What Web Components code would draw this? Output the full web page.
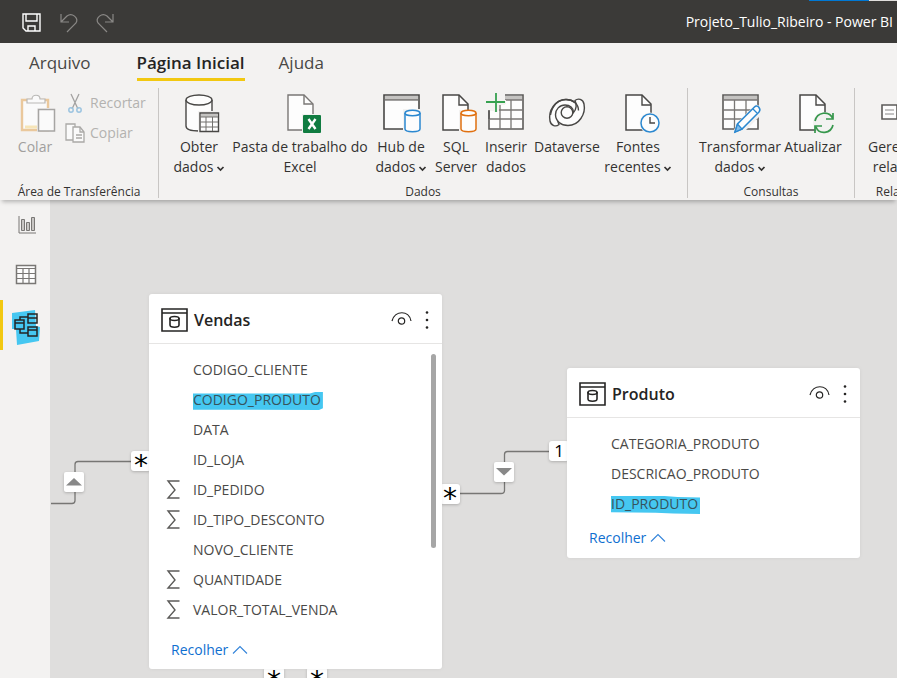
<!DOCTYPE html>
<html lang="pt-BR">
<head>
<meta charset="utf-8">
<meta name="viewport" content="width=device-width, initial-scale=1">
<title>Projeto_Tulio_Ribeiro - Power BI</title>
<style>
html, body { margin: 0; height: 100%; }
body { font-family: "Open Sans", "Noto Sans", sans-serif; font-size: 14px; line-height: 20px; color: #333231; background: #dfdedd; overflow: hidden; }
</style>
</head>
<body>
<pbi-app></pbi-app>
<script>
const ICONS = {
  save: [20, 20, '<g fill="none" stroke="#fff" stroke-width="1.4"><path d="M1 1h17v17H4l-3-3z"/><path d="M4 1v7h11V1M6 18v-5h7v5"/></g>'],
  undo: [20, 20, '<path d="M2 1v8h8M2 9l6-6c5-4 12 2 9 7L8 19" fill="none" stroke="#8a8886" stroke-width="1.2"/>'],
  redo: [20, 20, '<path d="M17 1v8H9M17 9l-6-6C6-1-1 5 2 10l9 9" fill="none" stroke="#8a8886" stroke-width="1.2"/>'],
  paste: [30, 40, '<path d="M2 7h26v30H2z" fill="#fafafa" stroke="#eac89c" stroke-width="2.4"/><path d="M5 34h12" stroke="#f6e5b8" stroke-width="3"/><path d="M7 10V6h5c0-5 8-5 8 0h5v4z" fill="#fafafa" stroke="#b9b8b6" stroke-width="1.2"/><path d="M17 15v25h3V18h14v-3z" fill="#f3f2f1"/><path d="M18.500 16.500h16v21.500h-16z" fill="#fafafa" stroke="#a6a5a3" stroke-width="1.500"/>'],
  cut: [20, 20, '<path d="M6 1l7 15M14 1L7 16" stroke="#a3a2a1" fill="none" stroke-width="1.3"/><g fill="none" stroke="#9cc4e0" stroke-width="1.5"><circle cx="6" cy="17" r="2.200"/><circle cx="14" cy="17" r="2.200"/></g>'],
  copy: [20, 20, '<g fill="#fafafa" stroke="#aaa9a7" stroke-width="1.3"><path d="M8 17H1V1h9v3"/><path d="M8 4h7l4 5v10H8z"/><path d="M15 4v5h4M11 12h6M11 15h6" fill="none"/></g>'],
  database: [30, 40, '<path d="M2 7v26c0 3.500 6 5 13 5s13-1.500 13-5V7" fill="#fdfdfd" stroke="#484745" stroke-width="1.400"/><ellipse cx="15" cy="7" rx="13" ry="5" fill="#fdfdfd" stroke="#484745" stroke-width="1.400"/><path d="M14 18h22v21H14z" fill="#f3f2f1"/><path d="M16 20h18.500v18.500H16z" fill="#fdfdfd" stroke="#484745" stroke-width="1.400"/><path d="M17 21h17v3H17z" fill="#c4c3c1"/><path d="M16 24h18M16 29h18M16 34h18M22 24v14M28.500 24v14" stroke="#72716f" fill="none"/>'],
  excel: [30, 40, '<path d="M3 2h16l9 9v26H3z" fill="#fdfdfd" stroke="#797775" stroke-width="1.400"/><path d="M19 2v9h9" fill="none" stroke="#797775" stroke-width="1.400"/><path d="M17 21h18v19H17z" fill="#f3f2f1"/><rect x="18" y="22" width="18" height="18" rx="1" fill="#107c41"/><path d="M23.500 26l7 10M30.500 26l-7 10" stroke="#fff" stroke-width="2.400"/>'],
  hub: [36, 40, '<path d="M1 2h35v34H1z" fill="#fdfdfd" stroke="#484745" stroke-width="1.600"/><path d="M2 3h33v4H2z" fill="#c4c3c1"/><path d="M2 7h33" stroke="#484745" stroke-width="1.200"/><path d="M20 16h18v24H20z" fill="#f3f2f1"/><path d="M22 20v16c0 3.500 15 3.500 15 0V20" fill="#fdfdfd" stroke="#2b88d0" stroke-width="1.500"/><ellipse cx="29.500" cy="20" rx="7.500" ry="2.800" fill="#fdfdfd" stroke="#2b88d0" stroke-width="1.500"/>'],
  sql: [32, 40, '<path d="M3 2h16l9 9v26H3z" fill="#fdfdfd" stroke="#484745" stroke-width="1.500"/><path d="M19 2v10h9" fill="none" stroke="#484745" stroke-width="1.400"/><path d="M19 17h17v23H19z" fill="#f3f2f1"/><path d="M21 20v16c0 3.500 15 3.500 15 0V20" fill="#fdfdfd" stroke="#e07010" stroke-width="1.500"/><ellipse cx="28.500" cy="20" rx="7.500" ry="2.800" fill="#fdfdfd" stroke="#e07010" stroke-width="1.500"/>'],
  insert: [40, 40, '<path d="M3 2h34v34H3z" fill="#fdfdfd" stroke="#5c5b59" stroke-width="1.600"/><path d="M4 3h32v4H4z" fill="#c4c3c1"/><path d="M3 7h34M3 17h34M3 26h34M14 7v29M25 7v29" stroke="#797775" stroke-width="1.300" fill="none"/><path d="M0 0h19v12h-6v6H0z" fill="#f3f2f1"/><path d="M10 0v19M0 9h20" stroke="#f3f2f1" stroke-width="4"/><path d="M10 0v19M0 9h19" stroke="#36a150" stroke-width="1.800"/><path d="M3 17v9" stroke="#5c5b59" stroke-width="1.600"/>'],
  dataverse: [38, 40, '<g fill="#fdfdfd" stroke="#484745" stroke-width="1.400"><path d="M11 31.500C8 34 3 33 2 28 0 18 7 6.500 18 6.500c7 0 12.500 4.500 12.500 11 0 5-4 9.500-9.500 9.500-5 0-8.500-3-8.500-7.500-3 3-3.500 8.500-1.500 12z"/><path d="M27 7.500c3-2.500 8-1.500 9 3.500 2 10-5 21.500-16 21.500-7 0-12.500-4.500-12.500-11 0-5 4-9.500 9.500-9.500 5 0 8.500 3 8.500 7.500 3-3 3.500-8.500 1.500-12z"/></g><path d="M2.500 22C4 13 10 6.500 18 6.500c7 0 12.500 4.500 12.500 11" fill="none" stroke="#484745" stroke-width="1.400"/><circle cx="19" cy="19.500" r="5.800" fill="#fdfdfd" stroke="#484745" stroke-width="1.400"/>'],
  recent: [30, 40, '<path d="M3 2h16l9 9v26H3z" fill="#fdfdfd" stroke="#484745" stroke-width="1.500"/><path d="M19 2v10h9" fill="none" stroke="#484745" stroke-width="1.400"/><circle cx="27" cy="30" r="10.500" fill="#f3f2f1"/><circle cx="27" cy="30" r="9" fill="#fdfdfd" stroke="#2b88d0" stroke-width="1.500"/><path d="M27 24v6h5" fill="none" stroke="#484745" stroke-width="1.400"/>'],
  transform: [36, 40, '<path d="M1 2h35v34H1z" fill="#fdfdfd" stroke="#5c5b59" stroke-width="1.600"/><path d="M2 3h33v4H2z" fill="#c4c3c1"/><path d="M1 7h35M1 17h35M1 26h35M12.500 7v29M24 7v29" stroke="#797775" stroke-width="1.300" fill="none"/><path d="M10 41L16 29 34 11l5 3v8L21 40z" fill="#f3f2f1"/><path d="M13 39l2.500-8 17-17c3-3 7 2 4.500 5L20 36z" fill="#fdfdfd" stroke="#2b88d0" stroke-width="1.500"/><path d="M13 39l2.500-8 4.500 5zM31 16l4 4" fill="#83bdea" stroke="#2b88d0" stroke-width="1.300"/>'],
  refresh: [32, 40, '<path d="M3 2h16l9 9v26H3z" fill="#fdfdfd" stroke="#484745" stroke-width="1.500"/><path d="M19 2v10h9" fill="none" stroke="#484745" stroke-width="1.400"/><circle cx="27" cy="30" r="11" fill="#f3f2f1"/><g fill="none" stroke="#36974c" stroke-width="1.700"><path d="M18 28c2-9 14-11 18-2M36 20v6h-7M36 32c-2 9-14 10-17 2M18 40v-7h7"/></g>'],
  relations: [38, 40, '<g fill="#fdfdfd" stroke="#5c5b59" stroke-width="1.600"><path d="M1 12h15v14H1z"/><path d="M16 19h7"/><path d="M23 12h14v14H23z"/></g><path d="M4 17h9M4 21h9M26 17h8M26 21h8" stroke="#888"/>'],
  report: [20, 20, '<path d="M2 1v17h17" fill="none" stroke="#797775"/><g fill="#c8c6c4" stroke="#797775"><path d="M4.500 4.500h3v11h-3zM9.500 7.500h3v8h-3zM14.500 2.500h3v13h-3z"/></g>'],
  grid: [24, 22, '<path d="M1.500 1.500h19v18h-19z" fill="#fdfdfd" stroke="#797775" stroke-width="1.500"/><path d="M1 4.500h20M1 9.500h20M1 14.500h20M8 4v16M14 4v16" stroke="#797775" stroke-width="1.200"/>'],
  model: [33, 30, '<path d="M1 3L24 0l1 16 4 1-1 14-22 4-1-16H1z" fill="#45c7f1"/><g fill="none" stroke="#252423" stroke-width="1.500"><path d="M4 10h9v9H4zM17 4h9v9h-9zM17 17h9v9h-9zM4 13h9M17 8h9M17 20h9M9 10V7h8M9 19v4h8"/></g>'],
  table: [28, 26, '<g fill="none" stroke="#252423" stroke-width="1.600"><path d="M1 2h25v22H1zM1 6h25"/><path d="M9 11v7c0 3 9 3 9 0v-7"/><ellipse cx="13.500" cy="11.500" rx="4.500" ry="2"/></g>'],
  eye: [22, 16, '<g fill="none" stroke="#252423" stroke-width="1.200"><path d="M1 9C4-2 18-2 20 9"/><circle cx="10.500" cy="9" r="3.200"/></g>'],
  more: [4, 20, '<g fill="#252423"><circle cx="2" cy="2.500" r="1.300"/><circle cx="2" cy="10" r="1.300"/><circle cx="2" cy="17.500" r="1.300"/></g>'],
  sigma: [14, 20, '<path d="M13.500 1H2l7 9-7 8h11.500" fill="none" stroke="#5c5b59" stroke-width="1.400"/>'],
  up: [16, 10, '<path d="M1 8.500L8 1.500l7 7" fill="none" stroke="#3384da" stroke-width="1.100"/>'],
  chevron: [9, 6, '<path d="M1.500 2l3 3 3-3" fill="none" stroke="#333231" stroke-width="1.700"/>']
};

class PbiIcon extends HTMLElement {
  connectedCallback() {
    if (this.shadowRoot) return;
    const [w, h, art] = ICONS[this.getAttribute('name')];
    this.attachShadow({ mode: 'open' }).innerHTML =
      `<style>:host{display:inline-flex;flex:none}svg{display:block;overflow:visible}</style>
       <svg width="${w}" height="${h}" viewBox="0 0 ${w} ${h}" aria-hidden="true">${art}</svg>`;
  }
}

function define(name, html, setup) {
  const t = document.createElement('template');
  t.innerHTML = html;
  customElements.define(name, class extends HTMLElement {
    connectedCallback() {
      if (this.shadowRoot) return;
      this.attachShadow({ mode: 'open' }).append(t.content.cloneNode(true));
      if (setup) setup(this, this.shadowRoot);
    }
  });
}

customElements.define('pbi-icon', PbiIcon);

define('pbi-titlebar', `
<style>
:host { display: flex; align-items: center; height: 43px; box-sizing: border-box; padding: 3px 4px 0 22px; background: #3b3a38; color: #fff; position: relative; font-size: 14px; }
button { background: none; border: 0; padding: 0; display: flex; margin-right: 17px; }
h1 { font: inherit; line-height: 22px; padding-bottom: 3px; margin: 0 0 0 auto; white-space: nowrap; }
.edge { position: absolute; top: 0; right: 0; width: 88px; height: 1px; background: linear-gradient(90deg, #0078d4 60px, #e1dfdd 60px); }
</style>
<button aria-label="Salvar"><pbi-icon name="save"></pbi-icon></button>
<button aria-label="Desfazer"><pbi-icon name="undo"></pbi-icon></button>
<button aria-label="Refazer"><pbi-icon name="redo"></pbi-icon></button>
<h1>Projeto_Tulio_Ribeiro - Power BI</h1>
<div class="edge"></div>`);

define('pbi-tabs', `
<style>
:host { display: block; background: #f3f2f1; }
nav { display: flex; gap: 34px; height: 41px; padding-left: 29px; box-sizing: border-box; font-size: 17px; }
a { color: #484745; text-decoration: none; height: 35px; line-height: 40px; border-bottom: 3px solid transparent; white-space: nowrap; }
a:first-child { margin-right: 12px; }
a.on { color: #252423; font-weight: 600; border-color: #f2c811; }
</style>
<nav><a href="#arquivo">Arquivo</a><a class="on" href="#inicio" aria-current="page">Página Inicial</a><a href="#ajuda">Ajuda</a></nav>`);

define('pbi-group', `
<style>
:host { display: flex; flex-direction: column; flex: none; box-sizing: border-box; border-right: 1px solid #c8c6c4; height: 110px; }
.items { display: flex; flex: 1; padding-left: var(--inset, 0); }
.label { text-align: center; font-size: 12px; line-height: 12px; white-space: nowrap; }
</style>
<div class="items"><slot></slot></div><div class="label"></div>`,
(el, root) => { root.querySelector('.label').textContent = el.getAttribute('label'); });

define('pbi-command', `
<style>
:host { display: block; flex: none; }
button { width: 100%; font: inherit; color: inherit; background: none; border: 0; padding: 5px 0 0; display: flex; flex-direction: column; align-items: center; }
span { white-space: nowrap; }
.art { height: 44px; }
.second { display: flex; align-items: center; gap: 2px; }
:host([disabled]) { color: #a19f9d; }
</style>
<button><div class="art"></div><span class="first"></span><span class="second"></span></button>`,
(el, root) => {
  root.querySelector('.art').innerHTML = `<pbi-icon name="${el.getAttribute('icon')}"></pbi-icon>`;
  root.querySelector('.first').textContent = el.getAttribute('first');
  const s = root.querySelector('.second');
  s.textContent = el.getAttribute('second') || '';
  if (el.hasAttribute('menu')) s.insertAdjacentHTML('beforeend', '<pbi-icon name="chevron" style="padding-top:2px"></pbi-icon>');
  root.querySelector('button').disabled = el.hasAttribute('disabled');
});

define('pbi-small', `
<style>
:host { display: block; }
button { display: flex; align-items: center; gap: 5px; font: inherit; color: #b3b2b0; background: none; border: 0; padding: 0; height: 30px; }
</style>
<button disabled><slot name="icon"></slot><slot></slot></button>`);

define('pbi-ribbon', `
<style>
:host { display: flex; background: #f3f2f1; height: 116px; padding-top: 4px; box-sizing: border-box; box-shadow: 0 4px 4px -2px rgba(0,0,0,.25); position: relative; z-index: 2; }
.strip { display: flex; overflow: hidden; flex: 1; }
.clipboard { width: 159px; }
.data { width: 529px; --inset: 9px; }
.queries { width: 167px; --inset: 10px; }
.relations { width: 92px; }
.w48 { width: 48px; } .w52 { width: 52px; } .w62 { width: 62px; } .w70 { width: 70px; } .w72 { width: 72px; } .w84 { width: 84px; } .w90 { width: 90px; } .w140 { width: 140px; }
.paste { width: 42px; margin: 0 9px 0 14px; }
</style>
<div class="strip">
<pbi-group class="clipboard" label="Área de Transferência">
  <pbi-command class="paste" icon="paste" first="Colar" disabled></pbi-command>
  <div><pbi-small><pbi-icon slot="icon" name="cut"></pbi-icon>Recortar</pbi-small><pbi-small><pbi-icon slot="icon" name="copy"></pbi-icon>Copiar</pbi-small></div>
</pbi-group>
<pbi-group class="data" label="Dados">
  <pbi-command class="w62" icon="database" first="Obter" second="dados" menu></pbi-command>
  <pbi-command class="w140" icon="excel" first="Pasta de trabalho do" second="Excel"></pbi-command>
  <pbi-command class="w62" icon="hub" first="Hub de" second="dados" menu></pbi-command>
  <pbi-command class="w48" icon="sql" first="SQL" second="Server"></pbi-command>
  <pbi-command class="w52" icon="insert" first="Inserir" second="dados"></pbi-command>
  <pbi-command class="w70" icon="dataverse" first="Dataverse"></pbi-command>
  <pbi-command class="w72" icon="recent" first="Fontes" second="recentes" menu></pbi-command>
</pbi-group>
<pbi-group class="queries" label="Consultas">
  <pbi-command class="w84" icon="transform" first="Transformar" second="dados" menu></pbi-command>
  <pbi-command class="w62" icon="refresh" first="Atualizar"></pbi-command>
</pbi-group>
<pbi-group class="relations" label="Relações">
  <pbi-command class="w90" icon="relations" first="Gerenciar" second="relações"></pbi-command>
</pbi-group>
</div>`);

define('pbi-views', `
<style>
:host { display: block; width: 50px; flex: none; background: #f3f2f1; }
nav { display: flex; flex-direction: column; }
button { height: 50px; border: 0; border-left: 3px solid transparent; background: none; padding: 0 0 0 1px; display: flex; align-items: center; justify-content: center; }
button.on { border-color: #f2c811; }
</style>
<nav><button aria-label="Relatório"><pbi-icon name="report"></pbi-icon></button>
<button aria-label="Dados"><pbi-icon name="grid"></pbi-icon></button>
<button class="on" aria-label="Modelo"><pbi-icon name="model"></pbi-icon></button></nav>`);

define('pbi-table', `
<style>
:host { display: block; width: 293px; background: #fff; border-radius: 3px; box-shadow: 0 0 4px rgba(0,0,0,.06); }
header { display: flex; align-items: center; height: 50px; padding: 2px 13px 0 12px; box-sizing: border-box; border-bottom: 1px solid #e6e5e4; }
h2 { margin: 0 auto 0 5px; font-size: 16px; line-height: 24px; font-weight: 600; color: #252423; }
header button { border: 0; background: none; padding: 0; display: flex; }
header button + button { margin-left: 12px; }
.body { position: relative; padding-top: 11px; }
ul { list-style: none; margin: 0; padding: 0; }
.foot { padding: 9px 0 10px 22px; }
:host([scroll]) .foot { padding: 15px 0 9px 22px; }
.foot a { color: #0f6fd0; text-decoration: none; display: inline-flex; gap: 4px; align-items: center; }
.thumb { display: none; position: absolute; right: 6px; top: 10px; width: 5px; height: 194px; border-radius: 3px; background: #a6a6a6; }
:host([scroll]) .thumb { display: block; }
</style>
<header><pbi-icon name="table"></pbi-icon><h2></h2><button aria-label="Visibilidade"><pbi-icon name="eye"></pbi-icon></button><button aria-label="Mais opções"><pbi-icon name="more"></pbi-icon></button></header>
<div class="body"><ul><slot></slot></ul><div class="thumb"></div></div>
<div class="foot"><a href="#recolher">Recolher<pbi-icon name="up"></pbi-icon></a></div>`,
(el, root) => { root.querySelector('h2').textContent = el.getAttribute('name'); });

define('pbi-field', `
<style>
:host { display: flex; align-items: center; height: 30px; padding-left: 17px; color: #4a4947; }
.mark { width: 14px; margin-right: 13px; display: flex; }
.text { position: relative; z-index: 0; }
:host([lit]) .text { color: #36535c; }
:host([lit]) .text::before { content: ""; position: absolute; z-index: -1; inset: 2px -2px 0 0; background: #45c7f1; clip-path: polygon(0 8%, 90% 8%, 94% 0, 100% 0, 100% 90%, 97% 100%, 0 98%); }
:host([lit="b"]) .text::before { clip-path: polygon(0 0, 60% 0, 75% 6%, 100% 9%, 100% 100%, 70% 97%, 50% 93%, 0 90%); }
</style>
<span class="mark"></span><span class="text"><slot></slot></span>`,
(el, root) => {
  el.setAttribute('role', 'listitem');
  if (el.hasAttribute('sum')) root.querySelector('.mark').innerHTML = '<pbi-icon name="sigma"></pbi-icon>';
});

define('pbi-end', `
<style>
:host { display: flex; align-items: center; justify-content: center; width: 20px; height: 20px; background: #fff; border-radius: 3px; box-shadow: 0 1px 3px rgba(0,0,0,.22); color: #000; font-size: 17px; line-height: 20px; }
:host([many]) { font-family: "DejaVu Sans", sans-serif; font-size: 28px; line-height: 30px; align-items: flex-start; }
</style><slot></slot>`);

define('pbi-canvas', `
<style>
:host { display: block; position: relative; flex: 1; min-width: 0; overflow: hidden; background: #dfdedd; }
svg.lines { position: absolute; left: 0; top: 0; width: 100%; height: 100%; }
pbi-table, pbi-end { position: absolute; }
.arrow { position: absolute; width: 20px; height: 20px; background: #fff; border-radius: 2px; box-shadow: 0 1px 3px rgba(0,0,0,.22); }
.arrow svg { display: block; }
</style>
<svg class="lines" aria-hidden="true"><g fill="none" stroke="#777674" stroke-width="1.300"><path d="M1 303.500H22Q25 303.500 25 300.500V264.500Q25 261.500 28 261.500H90"/><path d="M400 293.500H451Q454.500 293.500 454.500 290.500V254.500Q454.500 251.500 457.500 251.500H510"/></g></svg>
<div class="arrow" style="left:14px;top:272px"><svg width="20" height="20"><path d="M2 13.500L10 6l8 7.500z" fill="#888"/></svg></div>
<div class="arrow" style="left:444px;top:262px"><svg width="20" height="20"><path d="M2 6L10 13.500 18 6z" fill="#888"/></svg></div>
<pbi-end many style="left:81px;top:251px">*</pbi-end>
<pbi-end many style="left:390px;top:284px">*</pbi-end>
<pbi-end style="left:499px;top:241px">1</pbi-end>
<pbi-end many style="left:214px;top:467px">*</pbi-end>
<pbi-end many style="left:257px;top:467px">*</pbi-end>
<pbi-table name="Vendas" scroll style="left:99px;top:94px">
  <pbi-field>CODIGO_CLIENTE</pbi-field><pbi-field lit="a">CODIGO_PRODUTO</pbi-field><pbi-field>DATA</pbi-field><pbi-field>ID_LOJA</pbi-field><pbi-field sum>ID_PEDIDO</pbi-field><pbi-field sum>ID_TIPO_DESCONTO</pbi-field><pbi-field>NOVO_CLIENTE</pbi-field><pbi-field sum>QUANTIDADE</pbi-field><pbi-field sum>VALOR_TOTAL_VENDA</pbi-field>
</pbi-table>
<pbi-table name="Produto" style="left:517px;top:168px">
  <pbi-field>CATEGORIA_PRODUTO</pbi-field><pbi-field>DESCRICAO_PRODUTO</pbi-field><pbi-field lit="b">ID_PRODUTO</pbi-field>
</pbi-table>`);

define('pbi-app', `
<style>
:host { display: flex; flex-direction: column; height: 100vh; }
main { display: flex; flex: 1; min-height: 0; }
</style>
<pbi-titlebar></pbi-titlebar><pbi-tabs></pbi-tabs><pbi-ribbon></pbi-ribbon>
<main><pbi-views></pbi-views><pbi-canvas></pbi-canvas></main>`);
</script>
</body>
</html>
